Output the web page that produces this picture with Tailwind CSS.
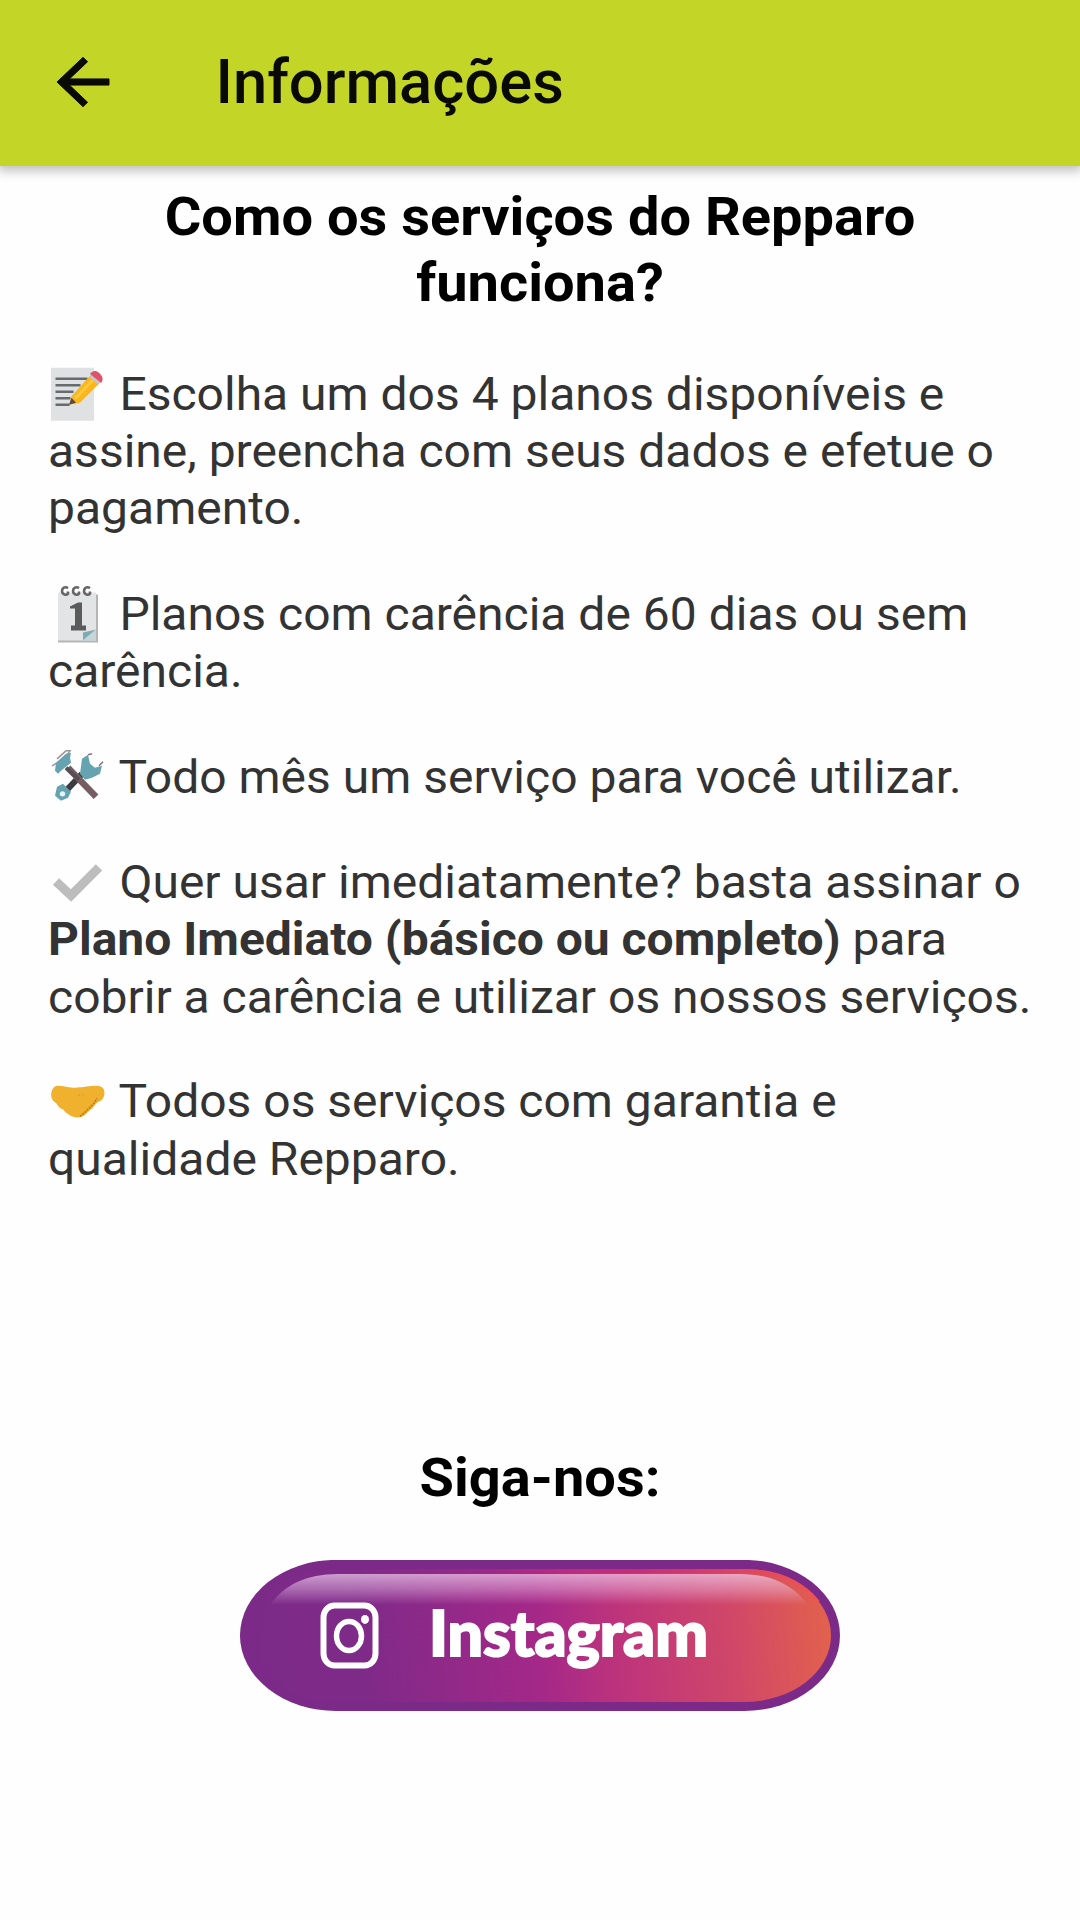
<!DOCTYPE html>
<html lang="pt-BR">
<head>
  <meta charset="UTF-8" />
  <meta name="viewport" content="width=device-width, initial-scale=1.0" />
  <title>Informações</title>
  <script src="https://cdn.jsdelivr.net/npm/@tailwindcss/browser@4"></script>
</head>

<body class="bg-[#fefefe] font-['Roboto',sans-serif] text-black antialiased">
  <!-- App bar -->
  <header class="flex h-[166px] items-center bg-[#c3d628] pl-[44px] shadow-[0_3px_10px_2px_rgba(0,0,0,0.25)]">
    <a href="#" class="-mt-0.5" aria-label="Voltar">
      <svg class="h-[74px] w-[78px]" viewBox="0 0 24 24" preserveAspectRatio="none" fill="#0a0a05" stroke="#0a0a05" stroke-width="0.3">
        <path d="M20 11H7.83l5.59-5.59L12 4l-8 8 8 8 1.41-1.41L7.83 13H20v-2z" />
      </svg>
    </a>
    <h1 class="-mt-0.5 ml-[93.5px] text-[61.5px] leading-[72px] font-medium text-[#0a0a05]">Informações</h1>
  </header>

  <main class="origin-top scale-y-[0.96] px-12 pt-[19.2px]">
    <h2 class="text-center text-[56px] leading-[68.75px] font-bold">Como os serviços do Repparo<br />funciona?</h2>

    <!-- Steps -->
    <div class="mt-[51.3px] flex flex-col gap-[50px] text-[48px] leading-[59.7px] whitespace-nowrap text-[#333]">
      <p>
        <svg class="inline-block h-[62.5px] w-[57px] -my-3 mr-[2.5px] align-[-2px]" viewBox="0 0 57 60" preserveAspectRatio="none">
          <path d="M3 5h43v53H3z" fill="#dfe1e2" />
          <path d="M7.500 16h32M7.500 22.500h25M7.500 29h18M7.500 35.500h15M7.500 42h14" stroke="#666b6e" stroke-width="2.400" />
          <path d="M21 42l3-9L43 12l9 8-20 20z" fill="#fbb61c" />
          <path d="M27 36l19-20" stroke="#fdc93f" stroke-width="3" />
          <path d="M21 42l2.500-7 4.500 5z" fill="#5a4a42" />
          <path d="M41 14l3-3 9 8-3 3z" fill="#c9c4c0" />
          <path d="M43 11c3-3 5-3 8 0s4 5 2 8z" fill="#e0526a" stroke="#e0526a" stroke-width="1.500" />
        </svg>
        Escolha um dos 4 planos disponíveis e<br />
        assine, preencha com seus dados e efetue o<br />
        pagamento.
      </p>

      <p>
        <svg class="inline-block h-[62.5px] w-[57px] -my-3 mr-[2.5px] align-[-2px]" viewBox="0 0 57 60" preserveAspectRatio="none">
          <path d="M10 11h40v48H10z" fill="#b5b5b5" />
          <path d="M10 9h38v48H10z" fill="#e3e4e5" />
          <path d="M35 57V49l13-3z" fill="#7cabb3" />
          <path d="M35 57l13-11v11z" fill="#c5d5d8" />
          <g fill="none" stroke="#666" stroke-width="2.600">
            <path d="M20 4.500c-3-2-6 0-6 3s4 5 6 2.500v-2" />
            <path d="M31 4.500c-3-2-6 0-6 3s4 5 6 2.500v-2" />
            <path d="M42 4.500c-3-2-6 0-6 3s4 5 6 2.500v-2" />
          </g>
          <path d="M22 23l8-4h4v23h4v5H23v-5h4V25h-5z" fill="#5b5b5b" />
        </svg>
        Planos com carência de 60 dias ou sem<br />
        carência.
      </p>

      <p>
        <svg class="inline-block h-[62.5px] w-[57px] -my-3 mr-[2.5px] align-[-2px]" viewBox="0 0 57 60" preserveAspectRatio="none">
          <path d="M18 45L34 28" stroke="#3a3d40" stroke-width="6" />
          <path d="M20 22l28 29" stroke="#765d63" stroke-width="6.500" />
          <path d="M18 22l13 12" stroke="#555054" stroke-width="4" />
          <path d="M7 25l1-8 10-9 5-1-1 5 1 5-10 8-3 3z" fill="#65a3b0" />
          <path d="M4 20l5-3M9 13l9-8h4l-3 4" fill="none" stroke="#9c969c" stroke-width="1.500" />
          <path d="M34 13l6-4 2 9 5 4 7-2-2 8-8 4-7 2-5-6z" fill="#65a3b0" />
          <path d="M40 9l4-1M51 20l4-4" stroke="#8b6c78" stroke-width="1.500" />
          <path d="M9 41l6-3 8 8-3 6-7 3-6-5z" fill="#65a3b0" />
          <circle cx="14.500" cy="48" r="2.700" fill="#e8f1f3" />
        </svg>
        Todo mês um serviço para você utilizar.
      </p>

      <p>
        <svg class="inline-block h-[62.5px] w-[57px] -my-3 mr-[2.5px] align-[-2px]" viewBox="0 0 57 60" preserveAspectRatio="none">
          <path d="M8 30l15 14L51 16" fill="none" stroke="#bdbdbd" stroke-width="9" />
        </svg>
        Quer usar imediatamente? basta assinar o<br />
        <strong class="font-bold">Plano Imediato (básico ou completo)</strong> para<br />
        cobrir a carência e utilizar os nossos serviços.
      </p>

      <p>
        <svg class="inline-block h-[62.5px] w-[57px] -my-3 mr-[2.5px] align-[-2px]" viewBox="0 0 57 60" preserveAspectRatio="none">
          <path d="M6 16c3-3 9-1 15 0 5 1 8 0 13 0 7-1 15-3 20 0 4 3 3 11-2 14-5 1-5 6-10 9-4 3-6 7-11 7-6 1-12-3-16-8-5-1-5-5-8-7-5-3-5-11-1-15z" fill="#f0b22e" />
          <path d="M32 45l4-3 5-5 5-5 3-5" fill="none" stroke="#c4731f" stroke-width="1.700" stroke-dasharray="2 1" />
          <path d="M30 24l4-1 4 2" fill="none" stroke="#d99a28" stroke-width="1.200" stroke-dasharray="2 2" />
        </svg>
        Todos os serviços com garantia e<br />
        qualidade Repparo.
      </p>
    </div>

    <!-- Social -->
    <h2 class="mt-[267.5px] text-center text-[56px] leading-[68.75px] font-bold">Siga-nos:</h2>
    <a href="#" class="mx-auto mt-[51.5px] block w-[600px]">
      <svg class="block h-[157.3px] w-[600px]" viewBox="0 0 600 151" preserveAspectRatio="none">
        <defs>
          <linearGradient id="fill" gradientUnits="userSpaceOnUse" x1="0" y1="100" x2="600" y2="50">
            <stop offset="0" stop-color="#7c2a88" />
            <stop offset="0.200" stop-color="#7e2a88" />
            <stop offset="0.500" stop-color="#a52888" />
            <stop offset="0.640" stop-color="#bf357a" />
            <stop offset="0.820" stop-color="#d04768" />
            <stop offset="1" stop-color="#e4644a" />
          </linearGradient>
          <linearGradient id="rim" gradientUnits="userSpaceOnUse" x1="96" y1="0" x2="578" y2="0">
            <stop offset="0.300" stop-color="#c02a80" stop-opacity="0" />
            <stop offset="0.600" stop-color="#c42c78" />
            <stop offset="1" stop-color="#ee5550" />
          </linearGradient>
          <linearGradient id="gloss" x1="0" y1="0" x2="0" y2="1">
            <stop offset="0" stop-color="#f3d5f0" stop-opacity="0.680" />
            <stop offset="0.500" stop-color="#f0c8ea" stop-opacity="0.400" />
            <stop offset="1" stop-color="#f0c0e8" stop-opacity="0" />
          </linearGradient>
        </defs>
        <rect width="600" height="151" rx="96" ry="75.500" fill="#7c2a88" />
        <rect x="9" y="9" width="582" height="133" rx="87" ry="66.500" fill="url(#fill)" />
        <path d="M96 11H504c34 0 58 12 74 31" fill="none" stroke="url(#rim)" stroke-width="4" />
        <path d="M30 45C44 25 66 14 98 14H500c32 0 54 12 68 31z" fill="url(#gloss)" />
        <!-- Camera -->
        <rect x="83.500" y="45.500" width="52" height="60" rx="11" ry="12" fill="none" stroke="#fff" stroke-width="6" />
        <ellipse cx="109" cy="76" rx="12.500" ry="14.500" fill="none" stroke="#fff" stroke-width="5.500" />
        <ellipse cx="125" cy="59.500" rx="4" ry="4.500" fill="#fff" />
        <text x="189" y="96.500" textLength="279" lengthAdjust="spacingAndGlyphs" font-family="Lato, sans-serif" font-weight="900" font-size="63" fill="#fff" stroke="#fff" stroke-width="2">Instagram</text>
      </svg>
    </a>
  </main>
</body>
</html>
